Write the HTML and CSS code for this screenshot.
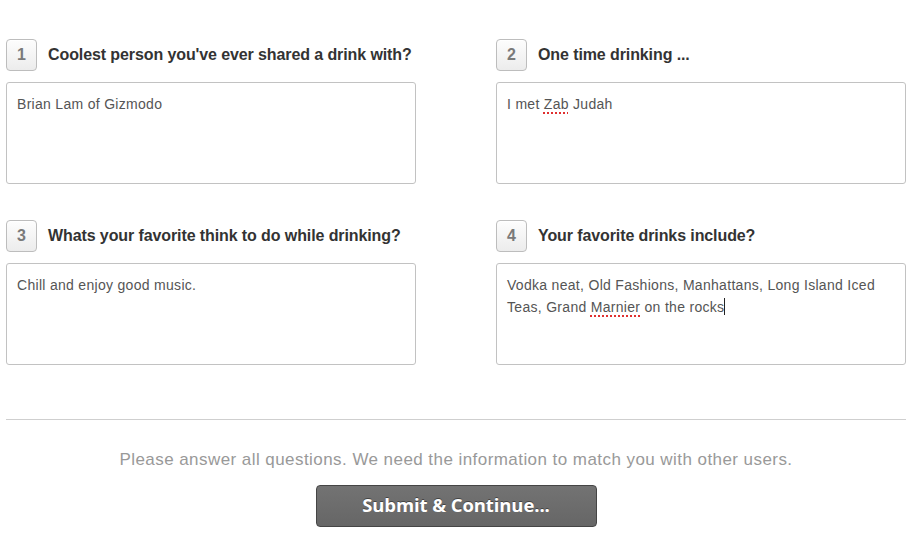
FILE: index.html
```html
<!DOCTYPE html>
<html>
<head>
<meta charset="utf-8">
<link rel="stylesheet" href="styles.css">
</head>
<body>
<div class="page">
  <div class="grid">
    <div class="question">
      <div class="qhead"><span class="badge">1</span><span class="qtitle">Coolest person you've ever shared a drink with?</span></div>
      <div class="answer">Brian Lam of Gizmodo</div>
    </div>
    <div class="question">
      <div class="qhead"><span class="badge">2</span><span class="qtitle">One time drinking ...</span></div>
      <div class="answer">I met <span class="spell">Zab</span> Judah</div>
    </div>
    <div class="question">
      <div class="qhead"><span class="badge">3</span><span class="qtitle">Whats your favorite think to do while drinking?</span></div>
      <div class="answer">Chill and enjoy good music.</div>
    </div>
    <div class="question">
      <div class="qhead"><span class="badge">4</span><span class="qtitle">Your favorite drinks include?</span></div>
      <div class="answer">Vodka neat, Old Fashions, Manhattans, Long Island Iced Teas, Grand <span class="spell">Marnier</span> on the rocks<span class="caret"></span></div>
    </div>
  </div>
  <hr class="divider">
  <p class="note">Please answer all questions. We need the information to match you with other users.</p>
  <div class="actions"><button class="submit">Submit &amp; Continue...</button></div>
</div>
</body>
</html>
```
FILE: styles.css
```css
html, body {
  margin: 0;
  padding: 0;
  background: #fff;
}
body {
  font-family: "Liberation Sans", Arial, Helvetica, sans-serif;
  color: #333;
}
.page {
  padding: 39px 7px 0 6px;
}
.grid {
  display: grid;
  grid-template-columns: 410px 410px;
  column-gap: 80px;
  row-gap: 36px;
}
.qhead {
  display: flex;
  align-items: center;
  height: 32px;
}
.badge {
  box-sizing: border-box;
  flex: none;
  width: 31px;
  height: 32px;
  border: 1px solid #bdbdbd;
  border-radius: 4px;
  background: linear-gradient(#fdfdfd, #ececec);
  display: flex;
  align-items: center;
  justify-content: center;
  font-weight: bold;
  font-size: 16px;
  color: #7a7a7a;
  box-shadow: inset 0 1px 0 #fff;
}
.qtitle {
  margin-left: 11px;
  font-weight: bold;
  font-size: 16px;
  letter-spacing: -0.1px;
  white-space: nowrap;
  color: #333;
}
.answer {
  box-sizing: border-box;
  margin-top: 11px;
  height: 102px;
  border: 1px solid #c2c2c2;
  border-radius: 3px;
  padding: 10px 10px;
  font-size: 14px;
  letter-spacing: 0.3px;
  line-height: 22px;
  color: #555;
}
.spell {
  text-decoration: underline dotted #e03030;
  text-underline-offset: 3px;
  text-decoration-thickness: 1.5px;
}
.caret {
  display: inline-block;
  width: 1px;
  height: 17px;
  background: #222;
  vertical-align: -3px;
}
.divider {
  margin: 54px 0 0 0;
  border: 0;
  border-top: 1px solid #cfcfcf;
  height: 0;
}
.note {
  margin: 30px 0 0 0;
  text-align: center;
  font-size: 17px;
  letter-spacing: 0.44px;
  line-height: 20px;
  color: #999;
}
.actions {
  display: flex;
  justify-content: center;
  margin-top: 15px;
}
.submit {
  box-sizing: border-box;
  width: 281px;
  height: 42px;
  border: 1px solid #454545;
  border-radius: 4px;
  background: linear-gradient(#737373, #666);
  color: #fff;
  font-family: "Open Sans", "DejaVu Sans", sans-serif;
  font-weight: bold;
  font-size: 18.5px;
  letter-spacing: -0.1px;
  text-shadow: 0 -1px 0 #444;
  padding: 0 0 3px 0;
}
```
